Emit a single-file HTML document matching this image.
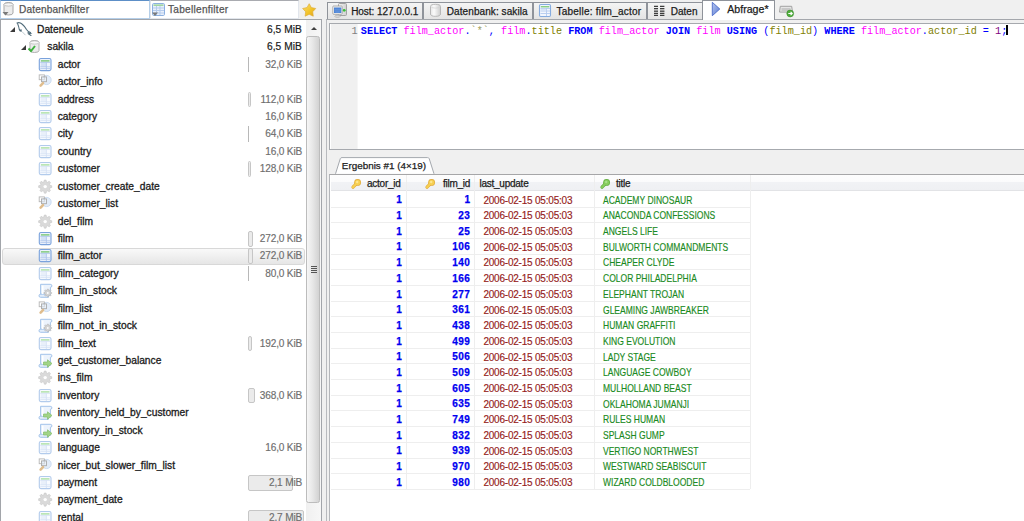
<!DOCTYPE html>
<html><head><meta charset="utf-8"><style>
*{margin:0;padding:0;box-sizing:border-box}
html,body{width:1024px;height:521px;overflow:hidden;background:#f0f0f0;font-family:"Liberation Sans", sans-serif;position:relative}
.a{position:absolute}
.tx,.sz,.ic,.tri,.bar,.sel,.num,.dt,.tt,.gl,.tab,.hd{position:absolute}
.tx{font-size:10.25px;color:#1b1b1b;-webkit-text-stroke:0.3px #1b1b1b;white-space:nowrap;line-height:12px}
.sz{right:722px;font-size:10.1px;letter-spacing:-0.18px;color:#6e6e6e;-webkit-text-stroke:0.15px #6e6e6e;white-space:nowrap;line-height:12px}
.sz.dark{color:#1b1b1b;font-size:10.2px;letter-spacing:0.08px;-webkit-text-stroke:0.2px #1b1b1b}
.tri{width:0;height:0;border-style:solid;border-width:0 0 5px 5px;border-color:transparent transparent #3a3a3a transparent}
.bar{left:248px;height:15.5px;border:1px solid #c6c6c6;border-radius:2px;background:#ebebeb}
.bar.thin{border-width:0 0 0 1px;border-radius:0;background:none;border-color:#b8b8b8}
.sel{left:2.2px;width:303px;height:17px;border:1px solid #d8d8d8;border-radius:3px;background:linear-gradient(#f9f9f9,#e6e6e6)}
.ic svg{display:block}
.num{font-size:10px;letter-spacing:0.45px;font-weight:bold;color:#0000f0;-webkit-text-stroke:0.25px #0000f0;text-align:right;line-height:12px;white-space:nowrap}
.dt{font-size:10px;letter-spacing:-0.21px;color:#951c20;-webkit-text-stroke:0.15px #951c20;line-height:12px;white-space:nowrap}
.tt{font-size:10.3px;color:#1a8a22;line-height:12px;white-space:nowrap;transform:scaleX(0.828);transform-origin:0 0;-webkit-text-stroke:0.15px #1a8a22}
.gl{left:331px;width:419.3px;height:1px;background:#eeeeee}
.tab{top:2px;height:17px;border:1px solid #8f939a;border-bottom:none;background:linear-gradient(#f4f4f4,#e4e4e4);font-size:10px;color:#1b1b1b;white-space:nowrap}
.tab span{position:absolute;top:3px;line-height:12px}
.tab svg{position:absolute}
.tl{position:absolute;top:6px;font-size:10px;color:#1b1b1b;line-height:12px;white-space:nowrap;-webkit-text-stroke:0.25px #1b1b1b;z-index:1}
.hd{font-size:10px;letter-spacing:-0.25px;color:#1b1b1b;line-height:12px;white-space:nowrap;-webkit-text-stroke:0.25px #1b1b1b}
.sql{position:absolute;left:360.8px;top:26px;font-family:"Liberation Mono", monospace;font-size:10.16px;line-height:12px;white-space:pre;color:#000}
.k{color:#0000ff;font-weight:bold} .t{color:#ff00ff} .f{color:#808000} .s{color:#0000ff} .n{color:#800080} .q{color:#a0a060}
</style></head><body>

<!-- filter bar -->
<div class="a" style="left:0;top:0;width:150px;height:19px;background:#fff;border:1px solid #b5cfe9;border-top-color:#5d8fc7"></div>
<svg class="a" style="left:2px;top:2px" width="13" height="14" viewBox="0 0 13 14">
 <path d="M2 2.5q0-2 4.5-2t4.5 2v8.5q0 2-4.5 2t-4.5-2z" fill="#ececec" stroke="#a8a8a8"/>
 <ellipse cx="6.5" cy="2.5" rx="4.5" ry="1.6" fill="#f6f6f6" stroke="#a8a8a8" stroke-width="0.6"/>
 <path d="M0.5 10h6l-3 3.5z" fill="#7a7a7a"/></svg>
<div class="a" style="left:19px;top:4px;font-size:10.1px;color:#555;line-height:12px;letter-spacing:0.15px;-webkit-text-stroke:0.25px #555">Datenbankfilter</div>
<div class="a" style="left:150px;top:0;width:149px;height:19px;background:#fff;border:1px solid #e2e6ec;border-top-color:#a9abb0"></div>
<svg class="a" style="left:152px;top:3px" width="13" height="13" viewBox="0 0 13 13">
 <rect x="0.5" y="0.5" width="12" height="12" rx="1.2" fill="#e8f0fb" stroke="#8cb0e0"/>
 <rect x="1.5" y="1.5" width="10" height="1.3" fill="#8fd08a"/>
 <path d="M1 5h11M1 7.5h11M1 10h11M4.5 3v9M8 3v9" stroke="#b5cbec"/>
 <path d="M0 9.5h6l-3 3.5z" fill="#7a7a7a"/></svg>
<div class="a" style="left:168px;top:4px;font-size:10.1px;color:#555;line-height:12px;letter-spacing:0.27px;-webkit-text-stroke:0.25px #555">Tabellenfilter</div>
<svg class="a" style="left:302px;top:0.7px" width="16" height="19" viewBox="0 0 16 19">
 <defs><linearGradient id="sg" x1="0" y1="0" x2="1" y2="1"><stop offset="0" stop-color="#fbe070"/><stop offset="0.6" stop-color="#f1c126"/><stop offset="1" stop-color="#e0a020"/></linearGradient></defs>
 <path d="M7.20 2.70 L9.37 6.61 L13.76 7.47 L10.72 10.74 L11.26 15.18 L7.20 13.30 L3.14 15.18 L3.68 10.74 L0.64 7.47 L5.03 6.61Z" fill="url(#sg)" stroke="#deae3a" stroke-width="0.7" stroke-linejoin="round"/></svg>

<!-- tree panel -->
<div class="a" style="left:0;top:19px;width:322px;height:510px;background:#fff;border:1px solid #a2a5aa"></div>
<div class="a" style="left:306px;top:20px;width:15px;height:501px;background:linear-gradient(90deg,#f0f0f0,#f7f7f7)"></div>
<div class="a" style="left:310.7px;top:27.3px;width:0;height:0;border-style:solid;border-width:0 3.3px 3.6px 3.3px;border-color:transparent transparent #404040 transparent"></div>
<div class="a" style="left:306.2px;top:36.4px;width:13.4px;height:467px;border:1px solid #bcbcbc;border-radius:2.5px;background:linear-gradient(90deg,#f6f6f6,#e8e8e8 45%,#d2d2d2)"></div>
<div class="a" style="left:310.5px;top:266px;width:6px;height:1px;background:#555;box-shadow:0 2px 0 #555,0 4px 0 #555,0 6px 0 #555"></div>
<div class="tri" style="left:10px;top:27.44px"></div>
<svg class="ic" style="left:15px;top:20.00px" width="20" height="18" viewBox="0 0 20 18"><g fill="none" stroke="#4f6b79" stroke-width="1.1" stroke-linecap="round"><path d="M2 3 Q4.5 1.8 7 4 Q10 6.5 11.5 9.5 Q12.8 11.5 15.5 12.6"/><path d="M13 12.6 L15.6 13.3 L13.6 14 L16 15.4"/><path d="M2.6 3.6 Q3.8 6.5 4.3 9.5 Q4.8 11.2 6.2 11.2 L6 9.6"/></g><path d="M7 11.6 L10.5 15.2" stroke="#b8c4ca" stroke-width="0.9"/></svg>
<div class="tx" style="left:37px;top:23.84px">Dateneule</div>
<div class="sz dark" style="top:23.84px">6,5 MiB</div>
<div class="tri" style="left:20.5px;top:44.67px"></div>
<svg class="ic" style="left:28px;top:40.27px" width="13" height="13" viewBox="0 0 13 13"><path d="M2 2.5q0-2 4.5-2t4.5 2v8q0 2-4.5 2t-4.5-2z" fill="#ececec" stroke="#b0b0b0"/><ellipse cx="6.5" cy="2.5" rx="4.5" ry="1.6" fill="#f8f8f8" stroke="#b0b0b0" stroke-width="0.6"/><path d="M0.5 8.5l2.5 2.5 4-5" fill="none" stroke="#3cb03c" stroke-width="2"/></svg>
<div class="tx" style="left:47.3px;top:41.27px">sakila</div>
<div class="sz dark" style="top:41.27px">6,5 MiB</div>
<div class="bar thin" style="top:56.70px;width:1px"></div>
<div class="ic" style="left:37px;top:55.70px"><svg width="16" height="16" viewBox="0 0 16 16"><rect x="2.3" y="2.5" width="11.7" height="12.1" rx="1.6" fill="#eef4fc" stroke="#7aa2dc" stroke-width="1.1"/><rect x="3.9" y="4.2" width="8.6" height="1.4" fill="#79c873"/><rect x="3.8" y="6.4" width="5.5" height="4.3" fill="#d3e1f5"/><path d="M3.3 6.4h9.8M3.3 10.8h9.8M3.3 12.6h9.8M9.4 6.4v7.7" stroke="#a9c2ea" stroke-width="0.8"/></svg></div>
<div class="tx" style="left:57.7px;top:58.70px">actor</div>
<div class="sz" style="top:58.70px">32,0 KiB</div>
<div class="ic" style="left:37px;top:73.13px"><svg width="16" height="16" viewBox="0 0 16 16"><circle cx="9.6" cy="7" r="4.6" fill="#e2ecf9" stroke="#c2d5ef" stroke-width="0.8"/><rect x="2.2" y="1.9" width="5.2" height="4.8" fill="none" stroke="#b6b6b6" stroke-width="0.9"/><rect x="4.5" y="3.9" width="5" height="4.8" fill="#eef3fa" fill-opacity="0.5" stroke="#aaaaaa" stroke-width="0.9"/><path d="M3.6 12.6l2.4-2.4" stroke="#dfbd8e" stroke-width="2.6" stroke-linecap="round"/></svg></div>
<div class="tx" style="left:57.7px;top:76.13px">actor_info</div>
<div class="bar" style="top:91.56px;width:3px"></div>
<div class="ic" style="left:37px;top:90.56px"><svg width="16" height="16" viewBox="0 0 16 16"><rect x="2.3" y="2.5" width="11.7" height="12.1" rx="1.6" fill="#f8fbff" stroke="#b2cbec" stroke-width="1.1"/><rect x="3.9" y="4.2" width="8.6" height="1.4" fill="#ace0a4"/><rect x="3.8" y="6.4" width="5.5" height="4.3" fill="#e9f0fa"/><path d="M3.3 6.4h9.8M3.3 10.8h9.8M3.3 12.6h9.8M9.4 6.4v7.7" stroke="#d3e0f4" stroke-width="0.8"/></svg></div>
<div class="tx" style="left:57.7px;top:93.56px">address</div>
<div class="sz" style="top:93.56px">112,0 KiB</div>
<div class="ic" style="left:37px;top:107.99px"><svg width="16" height="16" viewBox="0 0 16 16"><rect x="2.3" y="2.5" width="11.7" height="12.1" rx="1.6" fill="#f8fbff" stroke="#b2cbec" stroke-width="1.1"/><rect x="3.9" y="4.2" width="8.6" height="1.4" fill="#ace0a4"/><rect x="3.8" y="6.4" width="5.5" height="4.3" fill="#e9f0fa"/><path d="M3.3 6.4h9.8M3.3 10.8h9.8M3.3 12.6h9.8M9.4 6.4v7.7" stroke="#d3e0f4" stroke-width="0.8"/></svg></div>
<div class="tx" style="left:57.7px;top:110.99px">category</div>
<div class="sz" style="top:110.99px">16,0 KiB</div>
<div class="bar thin" style="top:126.42px;width:1px"></div>
<div class="ic" style="left:37px;top:125.42px"><svg width="16" height="16" viewBox="0 0 16 16"><rect x="2.3" y="2.5" width="11.7" height="12.1" rx="1.6" fill="#f8fbff" stroke="#b2cbec" stroke-width="1.1"/><rect x="3.9" y="4.2" width="8.6" height="1.4" fill="#ace0a4"/><rect x="3.8" y="6.4" width="5.5" height="4.3" fill="#e9f0fa"/><path d="M3.3 6.4h9.8M3.3 10.8h9.8M3.3 12.6h9.8M9.4 6.4v7.7" stroke="#d3e0f4" stroke-width="0.8"/></svg></div>
<div class="tx" style="left:57.7px;top:128.42px">city</div>
<div class="sz" style="top:128.42px">64,0 KiB</div>
<div class="ic" style="left:37px;top:142.85px"><svg width="16" height="16" viewBox="0 0 16 16"><rect x="2.3" y="2.5" width="11.7" height="12.1" rx="1.6" fill="#f8fbff" stroke="#b2cbec" stroke-width="1.1"/><rect x="3.9" y="4.2" width="8.6" height="1.4" fill="#ace0a4"/><rect x="3.8" y="6.4" width="5.5" height="4.3" fill="#e9f0fa"/><path d="M3.3 6.4h9.8M3.3 10.8h9.8M3.3 12.6h9.8M9.4 6.4v7.7" stroke="#d3e0f4" stroke-width="0.8"/></svg></div>
<div class="tx" style="left:57.7px;top:145.85px">country</div>
<div class="sz" style="top:145.85px">16,0 KiB</div>
<div class="bar" style="top:161.28px;width:3px"></div>
<div class="ic" style="left:37px;top:160.28px"><svg width="16" height="16" viewBox="0 0 16 16"><rect x="2.3" y="2.5" width="11.7" height="12.1" rx="1.6" fill="#f8fbff" stroke="#b2cbec" stroke-width="1.1"/><rect x="3.9" y="4.2" width="8.6" height="1.4" fill="#ace0a4"/><rect x="3.8" y="6.4" width="5.5" height="4.3" fill="#e9f0fa"/><path d="M3.3 6.4h9.8M3.3 10.8h9.8M3.3 12.6h9.8M9.4 6.4v7.7" stroke="#d3e0f4" stroke-width="0.8"/></svg></div>
<div class="tx" style="left:57.7px;top:163.28px">customer</div>
<div class="sz" style="top:163.28px">128,0 KiB</div>
<div class="ic" style="left:37px;top:177.71px"><svg width="16" height="16" viewBox="0 0 16 16"><path d="M12.92 7.29 L14.74 7.75 L14.74 9.45 L12.92 9.91 L12.46 11.02 L13.43 12.62 L12.22 13.83 L10.62 12.86 L9.51 13.32 L9.05 15.14 L7.35 15.14 L6.89 13.32 L5.78 12.86 L4.18 13.83 L2.97 12.62 L3.94 11.02 L3.48 9.91 L1.66 9.45 L1.66 7.75 L3.48 7.29 L3.94 6.18 L2.97 4.58 L4.18 3.37 L5.78 4.34 L6.89 3.88 L7.35 2.06 L9.05 2.06 L9.51 3.88 L10.62 4.34 L12.22 3.37 L13.43 4.58 L12.46 6.18Z" fill="#dadada" stroke="#c6c6c6" stroke-width="0.6" stroke-linejoin="round"/><circle cx="8.2" cy="8.6" r="1.7" fill="#fff"/></svg></div>
<div class="tx" style="left:57.7px;top:180.71px">customer_create_date</div>
<div class="ic" style="left:37px;top:195.14px"><svg width="16" height="16" viewBox="0 0 16 16"><circle cx="9.6" cy="7" r="4.6" fill="#e2ecf9" stroke="#c2d5ef" stroke-width="0.8"/><rect x="2.2" y="1.9" width="5.2" height="4.8" fill="none" stroke="#b6b6b6" stroke-width="0.9"/><rect x="4.5" y="3.9" width="5" height="4.8" fill="#eef3fa" fill-opacity="0.5" stroke="#aaaaaa" stroke-width="0.9"/><path d="M3.6 12.6l2.4-2.4" stroke="#dfbd8e" stroke-width="2.6" stroke-linecap="round"/></svg></div>
<div class="tx" style="left:57.7px;top:198.14px">customer_list</div>
<div class="ic" style="left:37px;top:212.57px"><svg width="16" height="16" viewBox="0 0 16 16"><path d="M12.92 7.29 L14.74 7.75 L14.74 9.45 L12.92 9.91 L12.46 11.02 L13.43 12.62 L12.22 13.83 L10.62 12.86 L9.51 13.32 L9.05 15.14 L7.35 15.14 L6.89 13.32 L5.78 12.86 L4.18 13.83 L2.97 12.62 L3.94 11.02 L3.48 9.91 L1.66 9.45 L1.66 7.75 L3.48 7.29 L3.94 6.18 L2.97 4.58 L4.18 3.37 L5.78 4.34 L6.89 3.88 L7.35 2.06 L9.05 2.06 L9.51 3.88 L10.62 4.34 L12.22 3.37 L13.43 4.58 L12.46 6.18Z" fill="#dadada" stroke="#c6c6c6" stroke-width="0.6" stroke-linejoin="round"/><circle cx="8.2" cy="8.6" r="1.7" fill="#fff"/></svg></div>
<div class="tx" style="left:57.7px;top:215.57px">del_film</div>
<div class="bar" style="top:231.00px;width:5.2px"></div>
<div class="ic" style="left:37px;top:230.00px"><svg width="16" height="16" viewBox="0 0 16 16"><rect x="2.3" y="2.5" width="11.7" height="12.1" rx="1.6" fill="#eef4fc" stroke="#7aa2dc" stroke-width="1.1"/><rect x="3.9" y="4.2" width="8.6" height="1.4" fill="#79c873"/><rect x="3.8" y="6.4" width="5.5" height="4.3" fill="#d3e1f5"/><path d="M3.3 6.4h9.8M3.3 10.8h9.8M3.3 12.6h9.8M9.4 6.4v7.7" stroke="#a9c2ea" stroke-width="0.8"/></svg></div>
<div class="tx" style="left:57.7px;top:233.00px">film</div>
<div class="sz" style="top:233.00px">272,0 KiB</div>
<div class="sel" style="top:247.53px"></div>
<div class="bar" style="top:248.43px;width:5.2px"></div>
<div class="ic" style="left:37px;top:247.43px"><svg width="16" height="16" viewBox="0 0 16 16"><rect x="2.3" y="2.5" width="11.7" height="12.1" rx="1.6" fill="#eef4fc" stroke="#7aa2dc" stroke-width="1.1"/><rect x="3.9" y="4.2" width="8.6" height="1.4" fill="#79c873"/><rect x="3.8" y="6.4" width="5.5" height="4.3" fill="#d3e1f5"/><path d="M3.3 6.4h9.8M3.3 10.8h9.8M3.3 12.6h9.8M9.4 6.4v7.7" stroke="#a9c2ea" stroke-width="0.8"/></svg></div>
<div class="tx" style="left:57.7px;top:250.43px">film_actor</div>
<div class="sz" style="top:250.43px">272,0 KiB</div>
<div class="bar thin" style="top:265.86px;width:1px"></div>
<div class="ic" style="left:37px;top:264.86px"><svg width="16" height="16" viewBox="0 0 16 16"><rect x="2.3" y="2.5" width="11.7" height="12.1" rx="1.6" fill="#f8fbff" stroke="#b2cbec" stroke-width="1.1"/><rect x="3.9" y="4.2" width="8.6" height="1.4" fill="#ace0a4"/><rect x="3.8" y="6.4" width="5.5" height="4.3" fill="#e9f0fa"/><path d="M3.3 6.4h9.8M3.3 10.8h9.8M3.3 12.6h9.8M9.4 6.4v7.7" stroke="#d3e0f4" stroke-width="0.8"/></svg></div>
<div class="tx" style="left:57.7px;top:267.86px">film_category</div>
<div class="sz" style="top:267.86px">80,0 KiB</div>
<div class="ic" style="left:37px;top:282.29px"><svg width="16" height="16" viewBox="0 0 16 16"><path d="M3.6 2.3H13.2Q14.9 2.3 14.9 3.9Q14.9 5.3 13.4 5.3V13.4H3.6Z" fill="#ecf3fc" stroke="#a3c3ea" stroke-width="1"/><path d="M2 13.8Q2 12.2 3.6 12.2H11.5V15.3H3.6Q2 15.3 2 13.8Z" fill="#e2edfa" stroke="#a3c3ea" stroke-width="1"/><rect x="5" y="3.6" width="1.5" height="8.5" fill="#fff"/><path d="M13.50 10.25 L14.67 10.50 L14.67 11.50 L13.50 11.75 L13.24 12.38 L13.89 13.38 L13.18 14.09 L12.18 13.44 L11.55 13.70 L11.30 14.87 L10.30 14.87 L10.05 13.70 L9.42 13.44 L8.42 14.09 L7.71 13.38 L8.36 12.38 L8.10 11.75 L6.93 11.50 L6.93 10.50 L8.10 10.25 L8.36 9.62 L7.71 8.62 L8.42 7.91 L9.42 8.56 L10.05 8.30 L10.30 7.13 L11.30 7.13 L11.55 8.30 L12.18 8.56 L13.18 7.91 L13.89 8.62 L13.24 9.62Z" fill="#d4d4d4" stroke="#b4b4b4" stroke-width="0.6" stroke-linejoin="round"/><circle cx="10.8" cy="11.0" r="0.9" fill="#fff"/></svg></div>
<div class="tx" style="left:57.7px;top:285.29px">film_in_stock</div>
<div class="ic" style="left:37px;top:299.72px"><svg width="16" height="16" viewBox="0 0 16 16"><circle cx="9.6" cy="7" r="4.6" fill="#e2ecf9" stroke="#c2d5ef" stroke-width="0.8"/><rect x="2.2" y="1.9" width="5.2" height="4.8" fill="none" stroke="#b6b6b6" stroke-width="0.9"/><rect x="4.5" y="3.9" width="5" height="4.8" fill="#eef3fa" fill-opacity="0.5" stroke="#aaaaaa" stroke-width="0.9"/><path d="M3.6 12.6l2.4-2.4" stroke="#dfbd8e" stroke-width="2.6" stroke-linecap="round"/></svg></div>
<div class="tx" style="left:57.7px;top:302.72px">film_list</div>
<div class="ic" style="left:37px;top:317.15px"><svg width="16" height="16" viewBox="0 0 16 16"><path d="M3.6 2.3H13.2Q14.9 2.3 14.9 3.9Q14.9 5.3 13.4 5.3V13.4H3.6Z" fill="#ecf3fc" stroke="#a3c3ea" stroke-width="1"/><path d="M2 13.8Q2 12.2 3.6 12.2H11.5V15.3H3.6Q2 15.3 2 13.8Z" fill="#e2edfa" stroke="#a3c3ea" stroke-width="1"/><rect x="5" y="3.6" width="1.5" height="8.5" fill="#fff"/><path d="M13.50 10.25 L14.67 10.50 L14.67 11.50 L13.50 11.75 L13.24 12.38 L13.89 13.38 L13.18 14.09 L12.18 13.44 L11.55 13.70 L11.30 14.87 L10.30 14.87 L10.05 13.70 L9.42 13.44 L8.42 14.09 L7.71 13.38 L8.36 12.38 L8.10 11.75 L6.93 11.50 L6.93 10.50 L8.10 10.25 L8.36 9.62 L7.71 8.62 L8.42 7.91 L9.42 8.56 L10.05 8.30 L10.30 7.13 L11.30 7.13 L11.55 8.30 L12.18 8.56 L13.18 7.91 L13.89 8.62 L13.24 9.62Z" fill="#d4d4d4" stroke="#b4b4b4" stroke-width="0.6" stroke-linejoin="round"/><circle cx="10.8" cy="11.0" r="0.9" fill="#fff"/></svg></div>
<div class="tx" style="left:57.7px;top:320.15px">film_not_in_stock</div>
<div class="bar" style="top:335.58px;width:4px"></div>
<div class="ic" style="left:37px;top:334.58px"><svg width="16" height="16" viewBox="0 0 16 16"><rect x="2.3" y="2.5" width="11.7" height="12.1" rx="1.6" fill="#f8fbff" stroke="#b2cbec" stroke-width="1.1"/><rect x="3.9" y="4.2" width="8.6" height="1.4" fill="#ace0a4"/><rect x="3.8" y="6.4" width="5.5" height="4.3" fill="#e9f0fa"/><path d="M3.3 6.4h9.8M3.3 10.8h9.8M3.3 12.6h9.8M9.4 6.4v7.7" stroke="#d3e0f4" stroke-width="0.8"/></svg></div>
<div class="tx" style="left:57.7px;top:337.58px">film_text</div>
<div class="sz" style="top:337.58px">192,0 KiB</div>
<div class="ic" style="left:37px;top:352.01px"><svg width="16" height="16" viewBox="0 0 16 16"><path d="M3.6 2.3H13.2Q14.9 2.3 14.9 3.9Q14.9 5.3 13.4 5.3V13.4H3.6Z" fill="#ecf3fc" stroke="#a3c3ea" stroke-width="1"/><path d="M2 13.8Q2 12.2 3.6 12.2H11.5V15.3H3.6Q2 15.3 2 13.8Z" fill="#e2edfa" stroke="#a3c3ea" stroke-width="1"/><rect x="5" y="3.6" width="1.5" height="8.5" fill="#fff"/><path d="M6.5 10H10.5V7.8L15 11.5L10.5 15.3V13H6.5Z" fill="#a2d488" stroke="#84bf68" stroke-width="0.7" stroke-linejoin="round"/></svg></div>
<div class="tx" style="left:57.7px;top:355.01px">get_customer_balance</div>
<div class="ic" style="left:37px;top:369.44px"><svg width="16" height="16" viewBox="0 0 16 16"><path d="M12.92 7.29 L14.74 7.75 L14.74 9.45 L12.92 9.91 L12.46 11.02 L13.43 12.62 L12.22 13.83 L10.62 12.86 L9.51 13.32 L9.05 15.14 L7.35 15.14 L6.89 13.32 L5.78 12.86 L4.18 13.83 L2.97 12.62 L3.94 11.02 L3.48 9.91 L1.66 9.45 L1.66 7.75 L3.48 7.29 L3.94 6.18 L2.97 4.58 L4.18 3.37 L5.78 4.34 L6.89 3.88 L7.35 2.06 L9.05 2.06 L9.51 3.88 L10.62 4.34 L12.22 3.37 L13.43 4.58 L12.46 6.18Z" fill="#dadada" stroke="#c6c6c6" stroke-width="0.6" stroke-linejoin="round"/><circle cx="8.2" cy="8.6" r="1.7" fill="#fff"/></svg></div>
<div class="tx" style="left:57.7px;top:372.44px">ins_film</div>
<div class="bar" style="top:387.87px;width:7px"></div>
<div class="ic" style="left:37px;top:386.87px"><svg width="16" height="16" viewBox="0 0 16 16"><rect x="2.3" y="2.5" width="11.7" height="12.1" rx="1.6" fill="#f8fbff" stroke="#b2cbec" stroke-width="1.1"/><rect x="3.9" y="4.2" width="8.6" height="1.4" fill="#ace0a4"/><rect x="3.8" y="6.4" width="5.5" height="4.3" fill="#e9f0fa"/><path d="M3.3 6.4h9.8M3.3 10.8h9.8M3.3 12.6h9.8M9.4 6.4v7.7" stroke="#d3e0f4" stroke-width="0.8"/></svg></div>
<div class="tx" style="left:57.7px;top:389.87px">inventory</div>
<div class="sz" style="top:389.87px">368,0 KiB</div>
<div class="ic" style="left:37px;top:404.30px"><svg width="16" height="16" viewBox="0 0 16 16"><path d="M3.6 2.3H13.2Q14.9 2.3 14.9 3.9Q14.9 5.3 13.4 5.3V13.4H3.6Z" fill="#ecf3fc" stroke="#a3c3ea" stroke-width="1"/><path d="M2 13.8Q2 12.2 3.6 12.2H11.5V15.3H3.6Q2 15.3 2 13.8Z" fill="#e2edfa" stroke="#a3c3ea" stroke-width="1"/><rect x="5" y="3.6" width="1.5" height="8.5" fill="#fff"/><path d="M6.5 10H10.5V7.8L15 11.5L10.5 15.3V13H6.5Z" fill="#a2d488" stroke="#84bf68" stroke-width="0.7" stroke-linejoin="round"/></svg></div>
<div class="tx" style="left:57.7px;top:407.30px">inventory_held_by_customer</div>
<div class="ic" style="left:37px;top:421.73px"><svg width="16" height="16" viewBox="0 0 16 16"><path d="M3.6 2.3H13.2Q14.9 2.3 14.9 3.9Q14.9 5.3 13.4 5.3V13.4H3.6Z" fill="#ecf3fc" stroke="#a3c3ea" stroke-width="1"/><path d="M2 13.8Q2 12.2 3.6 12.2H11.5V15.3H3.6Q2 15.3 2 13.8Z" fill="#e2edfa" stroke="#a3c3ea" stroke-width="1"/><rect x="5" y="3.6" width="1.5" height="8.5" fill="#fff"/><path d="M6.5 10H10.5V7.8L15 11.5L10.5 15.3V13H6.5Z" fill="#a2d488" stroke="#84bf68" stroke-width="0.7" stroke-linejoin="round"/></svg></div>
<div class="tx" style="left:57.7px;top:424.73px">inventory_in_stock</div>
<div class="ic" style="left:37px;top:439.16px"><svg width="16" height="16" viewBox="0 0 16 16"><rect x="2.3" y="2.5" width="11.7" height="12.1" rx="1.6" fill="#f8fbff" stroke="#b2cbec" stroke-width="1.1"/><rect x="3.9" y="4.2" width="8.6" height="1.4" fill="#ace0a4"/><rect x="3.8" y="6.4" width="5.5" height="4.3" fill="#e9f0fa"/><path d="M3.3 6.4h9.8M3.3 10.8h9.8M3.3 12.6h9.8M9.4 6.4v7.7" stroke="#d3e0f4" stroke-width="0.8"/></svg></div>
<div class="tx" style="left:57.7px;top:442.16px">language</div>
<div class="sz" style="top:442.16px">16,0 KiB</div>
<div class="ic" style="left:37px;top:456.59px"><svg width="16" height="16" viewBox="0 0 16 16"><circle cx="9.6" cy="7" r="4.6" fill="#e2ecf9" stroke="#c2d5ef" stroke-width="0.8"/><rect x="2.2" y="1.9" width="5.2" height="4.8" fill="none" stroke="#b6b6b6" stroke-width="0.9"/><rect x="4.5" y="3.9" width="5" height="4.8" fill="#eef3fa" fill-opacity="0.5" stroke="#aaaaaa" stroke-width="0.9"/><path d="M3.6 12.6l2.4-2.4" stroke="#dfbd8e" stroke-width="2.6" stroke-linecap="round"/></svg></div>
<div class="tx" style="left:57.7px;top:459.59px">nicer_but_slower_film_list</div>
<div class="bar" style="top:475.02px;width:45px"></div>
<div class="ic" style="left:37px;top:474.02px"><svg width="16" height="16" viewBox="0 0 16 16"><rect x="2.3" y="2.5" width="11.7" height="12.1" rx="1.6" fill="#f8fbff" stroke="#b2cbec" stroke-width="1.1"/><rect x="3.9" y="4.2" width="8.6" height="1.4" fill="#ace0a4"/><rect x="3.8" y="6.4" width="5.5" height="4.3" fill="#e9f0fa"/><path d="M3.3 6.4h9.8M3.3 10.8h9.8M3.3 12.6h9.8M9.4 6.4v7.7" stroke="#d3e0f4" stroke-width="0.8"/></svg></div>
<div class="tx" style="left:57.7px;top:477.02px">payment</div>
<div class="sz" style="top:477.02px">2,1 MiB</div>
<div class="ic" style="left:37px;top:491.45px"><svg width="16" height="16" viewBox="0 0 16 16"><path d="M12.92 7.29 L14.74 7.75 L14.74 9.45 L12.92 9.91 L12.46 11.02 L13.43 12.62 L12.22 13.83 L10.62 12.86 L9.51 13.32 L9.05 15.14 L7.35 15.14 L6.89 13.32 L5.78 12.86 L4.18 13.83 L2.97 12.62 L3.94 11.02 L3.48 9.91 L1.66 9.45 L1.66 7.75 L3.48 7.29 L3.94 6.18 L2.97 4.58 L4.18 3.37 L5.78 4.34 L6.89 3.88 L7.35 2.06 L9.05 2.06 L9.51 3.88 L10.62 4.34 L12.22 3.37 L13.43 4.58 L12.46 6.18Z" fill="#dadada" stroke="#c6c6c6" stroke-width="0.6" stroke-linejoin="round"/><circle cx="8.2" cy="8.6" r="1.7" fill="#fff"/></svg></div>
<div class="tx" style="left:57.7px;top:494.45px">payment_date</div>
<div class="bar" style="top:509.88px;width:56px"></div>
<div class="ic" style="left:37px;top:508.88px"><svg width="16" height="16" viewBox="0 0 16 16"><rect x="2.3" y="2.5" width="11.7" height="12.1" rx="1.6" fill="#f8fbff" stroke="#b2cbec" stroke-width="1.1"/><rect x="3.9" y="4.2" width="8.6" height="1.4" fill="#ace0a4"/><rect x="3.8" y="6.4" width="5.5" height="4.3" fill="#e9f0fa"/><path d="M3.3 6.4h9.8M3.3 10.8h9.8M3.3 12.6h9.8M9.4 6.4v7.7" stroke="#d3e0f4" stroke-width="0.8"/></svg></div>
<div class="tx" style="left:57.7px;top:511.88px">rental</div>
<div class="sz" style="top:511.88px">2,7 MiB</div>

<!-- splitter line -->
<!-- tabs -->
<div class="tab" style="left:327.3px;width:96px"></div>
<div class="tab" style="left:423.3px;width:109.5px"></div>
<div class="tab" style="left:533px;width:114px"></div>
<div class="tab" style="left:647px;width:56px"></div>
<div class="tab" style="left:702.2px;top:0;height:20px;width:73.3px;background:#fff;z-index:2"></div>
<div class="tl" style="left:351.2px;letter-spacing:-0.05px">Host: 127.0.0.1</div>
<div class="tl" style="left:446.8px;letter-spacing:0.08px">Datenbank: sakila</div>
<div class="tl" style="left:556.5px;letter-spacing:0.22px">Tabelle: film_actor</div>
<div class="tl" style="left:670.8px">Daten</div>
<div class="tl" style="left:727.3px;top:3.4px;font-size:10.6px;z-index:3">Abfrage*</div>
<svg class="a" style="left:330px;top:1px" width="20" height="18" viewBox="0 0 20 18">
 <defs><linearGradient id="tw" x1="0" y1="0" x2="1" y2="0"><stop offset="0" stop-color="#f6f6f6"/><stop offset="1" stop-color="#cfcfcf"/></linearGradient></defs>
 <rect x="8.5" y="2.5" width="8" height="12" rx="1" fill="url(#tw)" stroke="#a2a2a2"/>
 <circle cx="14.2" cy="9.3" r="1.4" fill="#38c038"/>
 <path d="M6.5 13.5h2v1.2h-2z" fill="#b8b8b8"/>
 <ellipse cx="7.5" cy="15.3" rx="2.8" ry="1.1" fill="#dadada" stroke="#a8a8a8" stroke-width="0.6"/>
 <rect x="2.8" y="5" width="9.4" height="8.3" rx="0.8" fill="#f2f2f2" stroke="#9c9c9c" stroke-width="0.8"/>
 <rect x="4" y="6.5" width="7.3" height="5.5" fill="#4a82d4"/>
 <path d="M4.5 8.3h6.3M4.5 10h6.3M5.5 11.2h4" stroke="#79a5e6" stroke-width="0.6"/>
</svg>
<svg class="a" style="left:426px;top:1px" width="20" height="18" viewBox="0 0 20 18">
 <defs><linearGradient id="cy" x1="0" y1="0" x2="1" y2="0"><stop offset="0" stop-color="#e6e6e6"/><stop offset="0.35" stop-color="#fbfbfb"/><stop offset="1" stop-color="#cdcdcd"/></linearGradient></defs>
 <path d="M4.5 5.5q0-2.2 5-2.2t5 2.2v7.5q0 2.3-5 2.3t-5-2.3z" fill="url(#cy)" stroke="#b2b2b2" stroke-width="0.9"/>
 <path d="M5 5.6q0 1.5 4.5 1.5t4.5-1.5" fill="none" stroke="#d0d0d0" stroke-width="0.7"/>
</svg>
<svg class="a" style="left:536px;top:1px" width="20" height="18" viewBox="0 0 20 18">
 <rect x="3.5" y="3.5" width="11" height="12" rx="1.2" fill="#f2f6fd" stroke="#86acdf" stroke-width="1.1"/>
 <rect x="4.8" y="5.1" width="8.5" height="1.3" fill="#7ecb78"/>
 <path d="M4.5 7.5h9.5M4.5 10h9.5M4.5 12.5h9.5M10.5 7v8" stroke="#b3cbee" stroke-width="0.9"/>
 <rect x="4.8" y="7.8" width="5.4" height="2" fill="#d6e3f6"/>
</svg>
<svg class="a" style="left:650px;top:1px" width="20" height="18" viewBox="0 0 20 18">
 <rect x="4" y="8" width="4" height="3" fill="#b5b5b5"/><rect x="10" y="8" width="4.4" height="3" fill="#b5b5b5"/>
 <path d="M4 5.4h4M4 7.5h4M4 10.3h4M4 12.4h4M4 14.4h4M10 5.4h4.4M10 7.5h4.4M10 10.3h4.4M10 12.4h4.4M10 14.4h4.4" stroke="#3c3c3c" stroke-width="1.1"/>
</svg>
<svg class="a" style="left:706px;top:0px;z-index:3" width="20" height="18" viewBox="0 0 20 18">
 <defs><linearGradient id="pl" x1="0" y1="0" x2="1" y2="1"><stop offset="0" stop-color="#b8c8f2"/><stop offset="1" stop-color="#5878d0"/></linearGradient></defs>
 <path d="M6.3 2.3L13.8 9 6.3 15.7z" fill="url(#pl)" stroke="#4c6cc8" stroke-width="0.9" stroke-linejoin="round"/>
</svg>
<svg class="a" style="left:775px;top:0px" width="25" height="20" viewBox="0 0 25 20">
 <path d="M5.3 6.3h11.4l0.8 5.8H4.5z" fill="#e6e6e6" stroke="#9a9a9a" stroke-width="0.9"/>
 <rect x="6.5" y="8" width="9" height="3" fill="#c8c8c8"/>
 <circle cx="15.2" cy="13.5" r="3.4" fill="#4fae3c" stroke="#3a8a2c" stroke-width="0.6"/>
 <path d="M13.3 13.5h3.8M15.6 11.9l1.6 1.6-1.6 1.6" fill="none" stroke="#fff" stroke-width="1.1"/>
</svg>

<!-- tab sheet -->
<div class="a" style="left:325.8px;top:19px;width:700px;height:510px;border:1px solid #a4a7ac;border-left-color:#b8babe;border-right:none;background:#f0f0f0;z-index:1"></div>
<!-- editor -->
<div class="a" style="left:329px;top:22.8px;width:700px;height:127px;background:#fff;border:1px solid #a6a9ae;border-right:none;z-index:1"></div>
<div class="a" style="left:330.5px;top:24px;width:27px;height:125px;background:#f0f0f0;z-index:1;border-right:1px solid #f6f6f6"></div>
<div class="a" style="left:351.5px;top:26px;font-family:'Liberation Mono',monospace;font-size:10.16px;line-height:12px;color:#808080;z-index:1">1</div>
<div class="sql" style="z-index:1"><span class="k">SELECT</span> <span class="t">film_actor</span><span class="s">.</span><span class="q">`*`</span><span class="s">,</span> <span class="t">film</span><span class="s">.</span><span class="f">title</span> <span class="k">FROM</span> <span class="t">film_actor</span> <span class="k">JOIN</span> <span class="t">film</span> <span class="k">USING</span> <span class="s">(</span><span class="f">film_id</span><span class="s">)</span> <span class="k">WHERE</span> <span class="t">film_actor</span><span class="s">.</span><span class="f">actor_id</span> <span class="s">=</span> <span class="n">1</span><span class="s">;</span></div>
<div class="a" style="left:1006.3px;top:24.5px;width:1.3px;height:10.5px;background:#000;z-index:1"></div>

<!-- results tab -->
<svg class="a" style="left:330px;top:156px;z-index:2" width="110" height="20" viewBox="0 0 110 20">
 <path d="M5.5 17.8 L10.3 2.6 Q10.7 1.6 12 1.6 L97.5 1.6 Q98.8 1.6 99.2 2.6 L104 17.8" fill="#fff" stroke="#a4a8ae" stroke-width="1"/>
</svg>
<div class="a" style="left:341.8px;top:160px;font-size:9.9px;line-height:12px;color:#1b1b1b;z-index:3;white-space:nowrap;-webkit-text-stroke:0.25px #1b1b1b">Ergebnis #1 (4×19)</div>

<!-- grid -->
<div class="a" style="left:329px;top:173.8px;width:700px;height:360px;background:#fff;border-top:1.5px solid #a6a6a8;border-left:1px solid #b4b6ba;z-index:2"></div>
<div class="a" style="left:330.5px;top:175px;width:700px;height:15.5px;background:linear-gradient(#fdfdfd 0,#fbfbfc 45%,#f1f2f5 50%,#eff0f3 100%);border-bottom:1px solid #e2e3e6;z-index:2"></div>
<div style="position:absolute;left:0;top:0;z-index:3">
<div class="a" style="left:406px;top:175px;width:1px;height:314px;background:#eeeeee"></div>
<div class="a" style="left:473.8px;top:175px;width:1px;height:314px;background:#eeeeee"></div>
<div class="a" style="left:594px;top:175px;width:1px;height:314px;background:#eeeeee"></div>
<div class="a" style="left:750px;top:175px;width:1px;height:314px;background:#eeeeee"></div>
<svg class="a" style="left:346.2px;top:175px" width="20" height="16" viewBox="0 0 20 16"><path d="M10.3 8.8 L7 12.2" stroke="#e0aa3a" stroke-width="3.2" stroke-linecap="round"/><circle cx="11.6" cy="7.4" r="3.4" fill="#e0aa3a"/><path d="M10.3 8.8 L7 12.2" stroke="#f6cf52" stroke-width="2.2" stroke-linecap="round"/><circle cx="11.6" cy="7.4" r="2.7" fill="#f6cf52"/><circle cx="11.2" cy="7" r="1.2" fill="#fde58f"/></svg>
<div class="hd" style="left:367px;top:177.6px">actor_id</div>
<svg class="a" style="left:420px;top:175px" width="20" height="16" viewBox="0 0 20 16"><path d="M10.3 8.8 L7 12.2" stroke="#e0aa3a" stroke-width="3.2" stroke-linecap="round"/><circle cx="11.6" cy="7.4" r="3.4" fill="#e0aa3a"/><path d="M10.3 8.8 L7 12.2" stroke="#f6cf52" stroke-width="2.2" stroke-linecap="round"/><circle cx="11.6" cy="7.4" r="2.7" fill="#f6cf52"/><circle cx="11.2" cy="7" r="1.2" fill="#fde58f"/></svg>
<div class="hd" style="left:443px;top:177.6px">film_id</div>
<div class="hd" style="left:479.5px;top:177.6px">last_update</div>
<svg class="a" style="left:595px;top:175px" width="20" height="16" viewBox="0 0 20 16"><path d="M10.3 8.8 L7 12.2" stroke="#62ad3e" stroke-width="3.2" stroke-linecap="round"/><circle cx="11.6" cy="7.4" r="3.4" fill="#62ad3e"/><path d="M10.3 8.8 L7 12.2" stroke="#86cc5c" stroke-width="2.2" stroke-linecap="round"/><circle cx="11.6" cy="7.4" r="2.7" fill="#86cc5c"/><circle cx="11.2" cy="7" r="1.2" fill="#a8e08a"/></svg>
<div class="hd" style="left:616px;top:177.6px">title</div>
<div class="gl" style="top:206.50px"></div>
<div class="num" style="left:330px;width:72.3px;top:194.40px">1</div>
<div class="num" style="left:407px;width:63.4px;top:194.40px">1</div>
<div class="dt" style="left:483.4px;top:194.70px">2006-02-15 05:05:03</div>
<div class="tt" style="left:603px;top:194.70px">ACADEMY DINOSAUR</div>
<div class="gl" style="top:222.19px"></div>
<div class="num" style="left:330px;width:72.3px;top:210.09px">1</div>
<div class="num" style="left:407px;width:63.4px;top:210.09px">23</div>
<div class="dt" style="left:483.4px;top:210.39px">2006-02-15 05:05:03</div>
<div class="tt" style="left:603px;top:210.39px">ANACONDA CONFESSIONS</div>
<div class="gl" style="top:237.88px"></div>
<div class="num" style="left:330px;width:72.3px;top:225.78px">1</div>
<div class="num" style="left:407px;width:63.4px;top:225.78px">25</div>
<div class="dt" style="left:483.4px;top:226.08px">2006-02-15 05:05:03</div>
<div class="tt" style="left:603px;top:226.08px">ANGELS LIFE</div>
<div class="gl" style="top:253.57px"></div>
<div class="num" style="left:330px;width:72.3px;top:241.47px">1</div>
<div class="num" style="left:407px;width:63.4px;top:241.47px">106</div>
<div class="dt" style="left:483.4px;top:241.77px">2006-02-15 05:05:03</div>
<div class="tt" style="left:603px;top:241.77px">BULWORTH COMMANDMENTS</div>
<div class="gl" style="top:269.26px"></div>
<div class="num" style="left:330px;width:72.3px;top:257.16px">1</div>
<div class="num" style="left:407px;width:63.4px;top:257.16px">140</div>
<div class="dt" style="left:483.4px;top:257.46px">2006-02-15 05:05:03</div>
<div class="tt" style="left:603px;top:257.46px">CHEAPER CLYDE</div>
<div class="gl" style="top:284.95px"></div>
<div class="num" style="left:330px;width:72.3px;top:272.85px">1</div>
<div class="num" style="left:407px;width:63.4px;top:272.85px">166</div>
<div class="dt" style="left:483.4px;top:273.15px">2006-02-15 05:05:03</div>
<div class="tt" style="left:603px;top:273.15px">COLOR PHILADELPHIA</div>
<div class="gl" style="top:300.64px"></div>
<div class="num" style="left:330px;width:72.3px;top:288.54px">1</div>
<div class="num" style="left:407px;width:63.4px;top:288.54px">277</div>
<div class="dt" style="left:483.4px;top:288.84px">2006-02-15 05:05:03</div>
<div class="tt" style="left:603px;top:288.84px">ELEPHANT TROJAN</div>
<div class="gl" style="top:316.33px"></div>
<div class="num" style="left:330px;width:72.3px;top:304.23px">1</div>
<div class="num" style="left:407px;width:63.4px;top:304.23px">361</div>
<div class="dt" style="left:483.4px;top:304.53px">2006-02-15 05:05:03</div>
<div class="tt" style="left:603px;top:304.53px">GLEAMING JAWBREAKER</div>
<div class="gl" style="top:332.02px"></div>
<div class="num" style="left:330px;width:72.3px;top:319.92px">1</div>
<div class="num" style="left:407px;width:63.4px;top:319.92px">438</div>
<div class="dt" style="left:483.4px;top:320.22px">2006-02-15 05:05:03</div>
<div class="tt" style="left:603px;top:320.22px">HUMAN GRAFFITI</div>
<div class="gl" style="top:347.71px"></div>
<div class="num" style="left:330px;width:72.3px;top:335.61px">1</div>
<div class="num" style="left:407px;width:63.4px;top:335.61px">499</div>
<div class="dt" style="left:483.4px;top:335.91px">2006-02-15 05:05:03</div>
<div class="tt" style="left:603px;top:335.91px">KING EVOLUTION</div>
<div class="gl" style="top:363.40px"></div>
<div class="num" style="left:330px;width:72.3px;top:351.30px">1</div>
<div class="num" style="left:407px;width:63.4px;top:351.30px">506</div>
<div class="dt" style="left:483.4px;top:351.60px">2006-02-15 05:05:03</div>
<div class="tt" style="left:603px;top:351.60px">LADY STAGE</div>
<div class="gl" style="top:379.09px"></div>
<div class="num" style="left:330px;width:72.3px;top:366.99px">1</div>
<div class="num" style="left:407px;width:63.4px;top:366.99px">509</div>
<div class="dt" style="left:483.4px;top:367.29px">2006-02-15 05:05:03</div>
<div class="tt" style="left:603px;top:367.29px">LANGUAGE COWBOY</div>
<div class="gl" style="top:394.78px"></div>
<div class="num" style="left:330px;width:72.3px;top:382.68px">1</div>
<div class="num" style="left:407px;width:63.4px;top:382.68px">605</div>
<div class="dt" style="left:483.4px;top:382.98px">2006-02-15 05:05:03</div>
<div class="tt" style="left:603px;top:382.98px">MULHOLLAND BEAST</div>
<div class="gl" style="top:410.47px"></div>
<div class="num" style="left:330px;width:72.3px;top:398.37px">1</div>
<div class="num" style="left:407px;width:63.4px;top:398.37px">635</div>
<div class="dt" style="left:483.4px;top:398.67px">2006-02-15 05:05:03</div>
<div class="tt" style="left:603px;top:398.67px">OKLAHOMA JUMANJI</div>
<div class="gl" style="top:426.16px"></div>
<div class="num" style="left:330px;width:72.3px;top:414.06px">1</div>
<div class="num" style="left:407px;width:63.4px;top:414.06px">749</div>
<div class="dt" style="left:483.4px;top:414.36px">2006-02-15 05:05:03</div>
<div class="tt" style="left:603px;top:414.36px">RULES HUMAN</div>
<div class="gl" style="top:441.85px"></div>
<div class="num" style="left:330px;width:72.3px;top:429.75px">1</div>
<div class="num" style="left:407px;width:63.4px;top:429.75px">832</div>
<div class="dt" style="left:483.4px;top:430.05px">2006-02-15 05:05:03</div>
<div class="tt" style="left:603px;top:430.05px">SPLASH GUMP</div>
<div class="gl" style="top:457.54px"></div>
<div class="num" style="left:330px;width:72.3px;top:445.44px">1</div>
<div class="num" style="left:407px;width:63.4px;top:445.44px">939</div>
<div class="dt" style="left:483.4px;top:445.74px">2006-02-15 05:05:03</div>
<div class="tt" style="left:603px;top:445.74px">VERTIGO NORTHWEST</div>
<div class="gl" style="top:473.23px"></div>
<div class="num" style="left:330px;width:72.3px;top:461.13px">1</div>
<div class="num" style="left:407px;width:63.4px;top:461.13px">970</div>
<div class="dt" style="left:483.4px;top:461.43px">2006-02-15 05:05:03</div>
<div class="tt" style="left:603px;top:461.43px">WESTWARD SEABISCUIT</div>
<div class="gl" style="top:488.92px"></div>
<div class="num" style="left:330px;width:72.3px;top:476.82px">1</div>
<div class="num" style="left:407px;width:63.4px;top:476.82px">980</div>
<div class="dt" style="left:483.4px;top:477.12px">2006-02-15 05:05:03</div>
<div class="tt" style="left:603px;top:477.12px">WIZARD COLDBLOODED</div>
</div>
</body></html>
